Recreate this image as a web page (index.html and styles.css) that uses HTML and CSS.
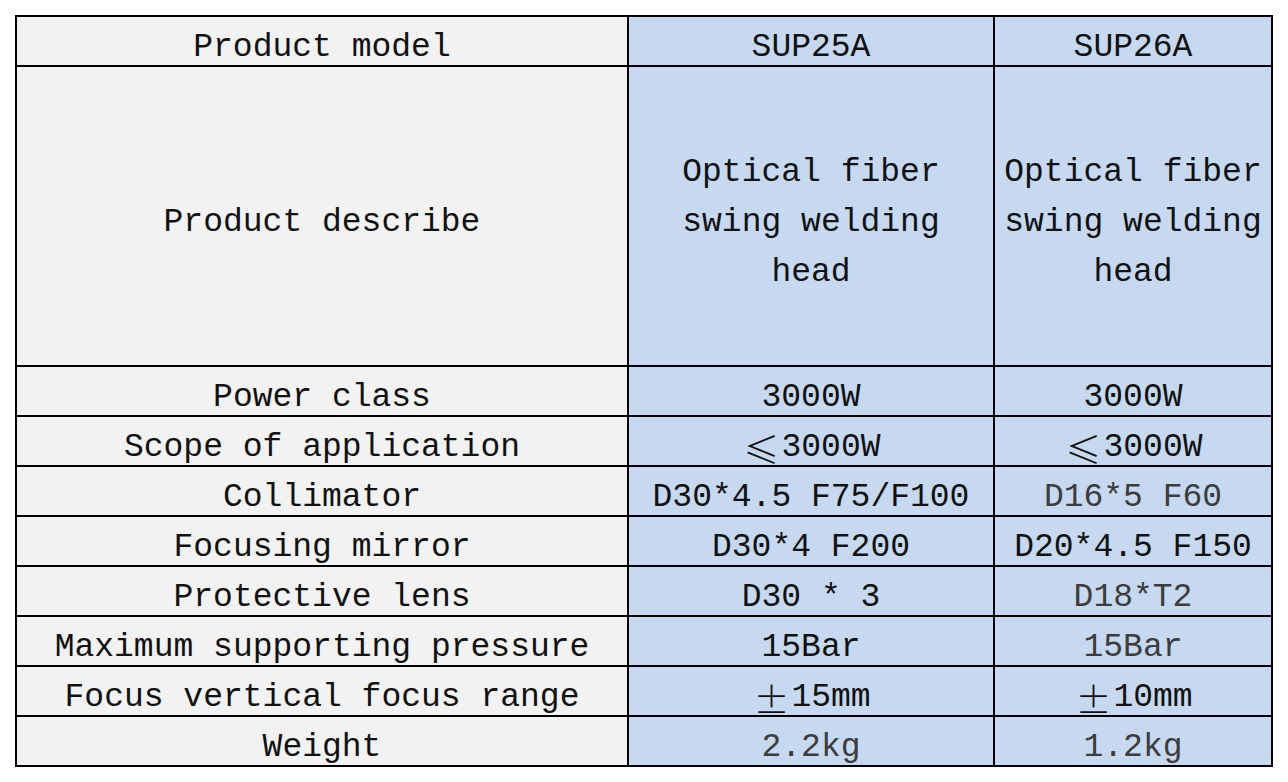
FILE: index.html
```html
<!DOCTYPE html>
<html>
<head>
<meta charset="utf-8">
<link rel="stylesheet" href="styles.css">
</head>
<body>
<div class="spec">
  <div class="cell label">Product model</div>
  <div class="cell val">SUP25A</div>
  <div class="cell val">SUP26A</div>

  <div class="cell label tall">Product describe</div>
  <div class="cell val tall">Optical fiber<br>swing welding<br>head</div>
  <div class="cell val tall">Optical fiber<br>swing welding<br>head</div>

  <div class="cell label">Power class</div>
  <div class="cell val">3000W</div>
  <div class="cell val">3000W</div>

  <div class="cell label">Scope of application</div>
  <div class="cell val"><span class="sym">≤</span>3000W</div>
  <div class="cell val"><span class="sym">≤</span>3000W</div>

  <div class="cell label">Collimator</div>
  <div class="cell val">D30*4.5 F75/F100</div>
  <div class="cell val dim">D16*5 F60</div>

  <div class="cell label">Focusing mirror</div>
  <div class="cell val">D30*4 F200</div>
  <div class="cell val">D20*4.5 F150</div>

  <div class="cell label">Protective lens</div>
  <div class="cell val">D30 * 3</div>
  <div class="cell val dim">D18*T2</div>

  <div class="cell label">Maximum supporting pressure</div>
  <div class="cell val">15Bar</div>
  <div class="cell val dim">15Bar</div>

  <div class="cell label">Focus vertical focus range</div>
  <div class="cell val"><span class="sym">±</span>15mm</div>
  <div class="cell val"><span class="sym">±</span>10mm</div>

  <div class="cell label">Weight</div>
  <div class="cell val dim">2.2kg</div>
  <div class="cell val dim">1.2kg</div>
</div>
</body>
</html>
```
FILE: styles.css
```css
html, body {
  margin: 0;
  padding: 0;
  background: #ffffff;
}
body {
  padding: 15px;
}
.spec {
  display: grid;
  grid-template-columns: 612px 366px 278px;
  grid-auto-rows: 50px;
  width: 1256px;
  border-left: 2px solid #000;
  border-top: 2px solid #000;
  font-family: "Liberation Mono", "DejaVu Sans Mono", monospace;
  font-size: 33px;
  color: #111;
}
.cell {
  box-sizing: border-box;
  border-right: 2px solid #000;
  border-bottom: 2px solid #000;
  display: flex;
  align-items: center;
  justify-content: center;
  text-align: center;
  white-space: nowrap;
  line-height: 50px;
  padding-top: 13px;
}
.label {
  background: #f2f2f2;
}
.val {
  background: #c6d9f0;
}
.tall {
  grid-row: span 6;
}
.dim {
  color: #3c3c3c;
}
.sym {
  font-family: "Noto Sans CJK SC", "DejaVu Sans", sans-serif;
  font-weight: 300;
  font-size: 36px;
  display: inline-block;
  width: 40px;
  text-align: center;
}
```
